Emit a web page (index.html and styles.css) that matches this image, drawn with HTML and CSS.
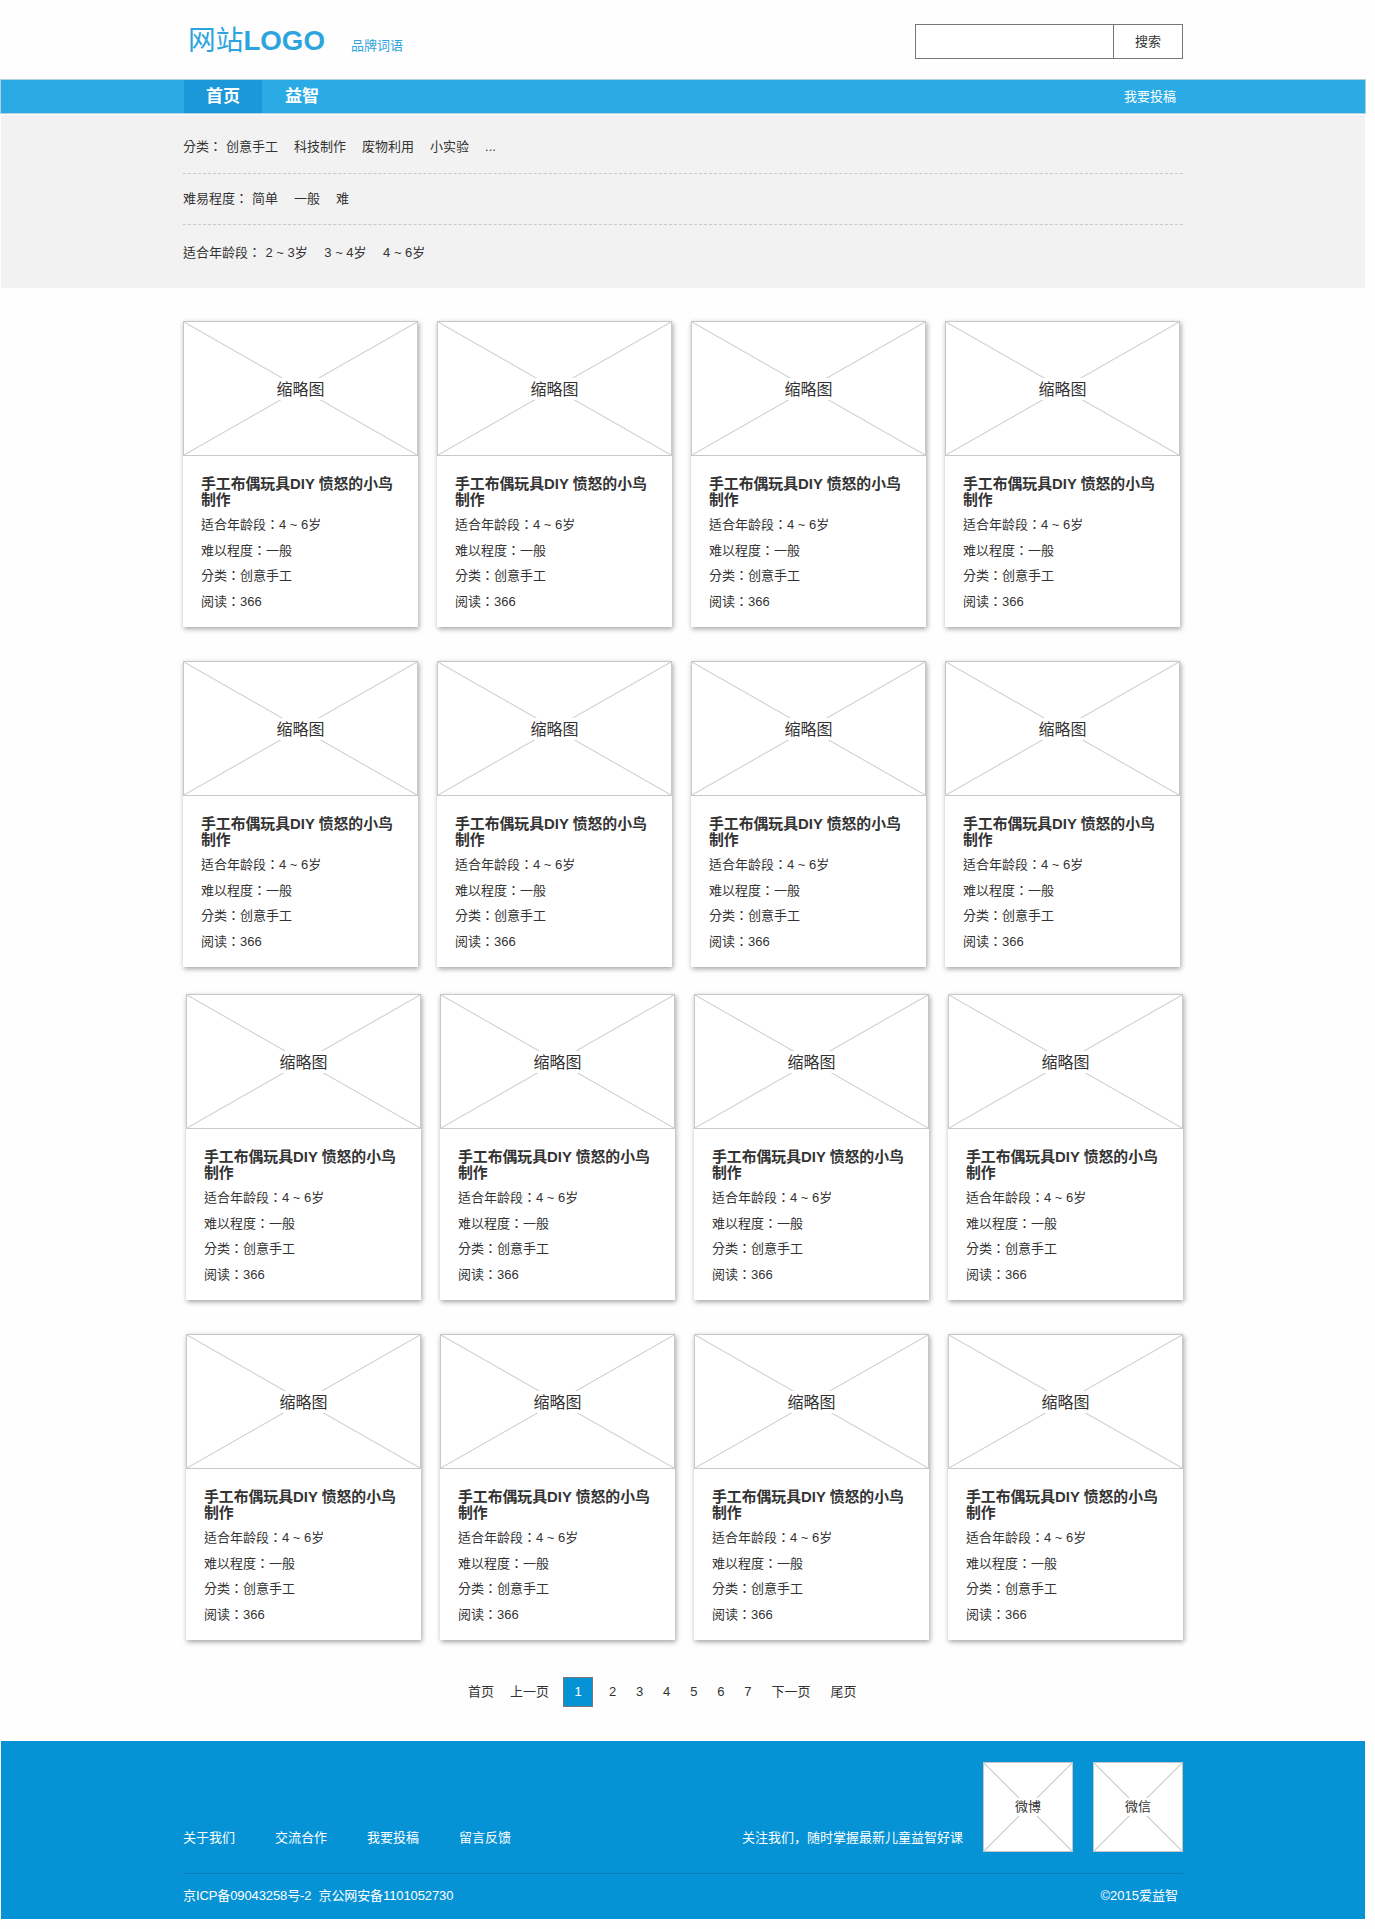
FILE: index.html
```html
<!DOCTYPE html>
<html lang="zh-CN">
<head>
<meta charset="utf-8">
<title>益智</title>
<link rel="stylesheet" href="styles.css">
</head>
<body>
<header class="header wrap">
  <div class="brand"><h1 class="logo"><span class="logo-cn">网站</span>LOGO</h1><span class="slogan">品牌词语</span></div>
  <form class="search"><input class="search-input" type="text" aria-label="搜索"><button class="search-btn" type="button">搜索</button></form>
</header>
<nav class="nav">
  <div class="nav-inner">
    <a class="nav-item active">首页</a><a class="nav-item">益智</a><a class="nav-post">我要投稿</a>
  </div>
</nav>
<section class="filters">
  <div class="filter-row"><span class="filter-label">分类：</span><a>创意手工</a><a>科技制作</a><a>废物利用</a><a>小实验</a><a>...</a></div>
  <div class="filter-row"><span class="filter-label">难易程度：</span><a>简单</a><a>一般</a><a>难</a></div>
  <div class="filter-row last"><span class="filter-label">适合年龄段：</span><a>2 ~ 3岁</a><a>3 ~ 4岁</a><a>4 ~ 6岁</a></div>
</section>
<main class="list">
  <div class="cards">
    <article class="card"><div class="thumb"><span>缩略图</span></div><h2>手工布偶玩具DIY 愤怒的小鸟制作</h2><p>适合年龄段：4 ~ 6岁</p><p>难以程度：一般</p><p>分类：创意手工</p><p>阅读：366</p></article>
    <article class="card"><div class="thumb"><span>缩略图</span></div><h2>手工布偶玩具DIY 愤怒的小鸟制作</h2><p>适合年龄段：4 ~ 6岁</p><p>难以程度：一般</p><p>分类：创意手工</p><p>阅读：366</p></article>
    <article class="card"><div class="thumb"><span>缩略图</span></div><h2>手工布偶玩具DIY 愤怒的小鸟制作</h2><p>适合年龄段：4 ~ 6岁</p><p>难以程度：一般</p><p>分类：创意手工</p><p>阅读：366</p></article>
    <article class="card"><div class="thumb"><span>缩略图</span></div><h2>手工布偶玩具DIY 愤怒的小鸟制作</h2><p>适合年龄段：4 ~ 6岁</p><p>难以程度：一般</p><p>分类：创意手工</p><p>阅读：366</p></article>
    <article class="card"><div class="thumb"><span>缩略图</span></div><h2>手工布偶玩具DIY 愤怒的小鸟制作</h2><p>适合年龄段：4 ~ 6岁</p><p>难以程度：一般</p><p>分类：创意手工</p><p>阅读：366</p></article>
    <article class="card"><div class="thumb"><span>缩略图</span></div><h2>手工布偶玩具DIY 愤怒的小鸟制作</h2><p>适合年龄段：4 ~ 6岁</p><p>难以程度：一般</p><p>分类：创意手工</p><p>阅读：366</p></article>
    <article class="card"><div class="thumb"><span>缩略图</span></div><h2>手工布偶玩具DIY 愤怒的小鸟制作</h2><p>适合年龄段：4 ~ 6岁</p><p>难以程度：一般</p><p>分类：创意手工</p><p>阅读：366</p></article>
    <article class="card"><div class="thumb"><span>缩略图</span></div><h2>手工布偶玩具DIY 愤怒的小鸟制作</h2><p>适合年龄段：4 ~ 6岁</p><p>难以程度：一般</p><p>分类：创意手工</p><p>阅读：366</p></article>
  </div>
  <div class="cards shifted">
    <article class="card"><div class="thumb"><span>缩略图</span></div><h2>手工布偶玩具DIY 愤怒的小鸟制作</h2><p>适合年龄段：4 ~ 6岁</p><p>难以程度：一般</p><p>分类：创意手工</p><p>阅读：366</p></article>
    <article class="card"><div class="thumb"><span>缩略图</span></div><h2>手工布偶玩具DIY 愤怒的小鸟制作</h2><p>适合年龄段：4 ~ 6岁</p><p>难以程度：一般</p><p>分类：创意手工</p><p>阅读：366</p></article>
    <article class="card"><div class="thumb"><span>缩略图</span></div><h2>手工布偶玩具DIY 愤怒的小鸟制作</h2><p>适合年龄段：4 ~ 6岁</p><p>难以程度：一般</p><p>分类：创意手工</p><p>阅读：366</p></article>
    <article class="card"><div class="thumb"><span>缩略图</span></div><h2>手工布偶玩具DIY 愤怒的小鸟制作</h2><p>适合年龄段：4 ~ 6岁</p><p>难以程度：一般</p><p>分类：创意手工</p><p>阅读：366</p></article>
    <article class="card"><div class="thumb"><span>缩略图</span></div><h2>手工布偶玩具DIY 愤怒的小鸟制作</h2><p>适合年龄段：4 ~ 6岁</p><p>难以程度：一般</p><p>分类：创意手工</p><p>阅读：366</p></article>
    <article class="card"><div class="thumb"><span>缩略图</span></div><h2>手工布偶玩具DIY 愤怒的小鸟制作</h2><p>适合年龄段：4 ~ 6岁</p><p>难以程度：一般</p><p>分类：创意手工</p><p>阅读：366</p></article>
    <article class="card"><div class="thumb"><span>缩略图</span></div><h2>手工布偶玩具DIY 愤怒的小鸟制作</h2><p>适合年龄段：4 ~ 6岁</p><p>难以程度：一般</p><p>分类：创意手工</p><p>阅读：366</p></article>
    <article class="card"><div class="thumb"><span>缩略图</span></div><h2>手工布偶玩具DIY 愤怒的小鸟制作</h2><p>适合年龄段：4 ~ 6岁</p><p>难以程度：一般</p><p>分类：创意手工</p><p>阅读：366</p></article>
  </div>
</main>
<div class="pager">
  <a class="first">首页</a><a class="prev">上一页</a><a class="current">1</a>
  <div class="pages"><a>2</a><a>3</a><a>4</a><a>5</a><a>6</a><a>7</a></div>
  <a class="next">下一页</a><a>尾页</a>
</div>
<footer class="footer">
  <div class="footer-top">
    <div class="footer-links"><a>关于我们</a><a>交流合作</a><a>我要投稿</a><a>留言反馈</a></div>
    <span class="follow">关注我们，随时掌握最新儿童益智好课</span>
    <div class="qr"><span>微博</span></div>
    <div class="qr"><span>微信</span></div>
  </div>
  <div class="footer-bottom"><span class="icp">京ICP备09043258号-2&nbsp; 京公网安备1101052730</span><span>©2015爱益智</span></div>
</footer>
</body>
</html>
```
FILE: styles.css
```css
* { box-sizing: border-box; }
body {
  margin: 0;
  background: #fefefe;
  color: #333;
  font: 13px/20px "Liberation Sans", "Noto Sans CJK SC", sans-serif;
}
h1, h2, p { margin: 0; }
a { white-space: nowrap; }

.wrap { width: 1000px; margin-left: 183px; }

.header {
  height: 79px;
  display: flex;
  justify-content: space-between;
  align-items: flex-start;
}
.brand { display: flex; align-items: baseline; padding: 21px 0 0 5px; color: #2ea4de; }
.logo { font-size: 27.7px; line-height: 40px; font-weight: bold; width: 163px; white-space: nowrap; }
.logo-cn { font-weight: 400; }
.slogan { font-size: 13px; }

.search { display: flex; width: 268px; height: 35px; margin-top: 24px; border: 1px solid #777; }
.search-input { width: 197px; border: 0; padding: 0 8px; background: #fff; font: inherit; }
.search-btn {
  flex: 1;
  border: 0;
  border-left: 1px solid #777;
  padding: 0;
  background: #fff;
  color: #333;
  font: inherit;
}

.nav { width: 1366px; height: 35px; border: 1px solid #b3cfdc; background: #2aabe6; }
.nav-inner { width: 999px; height: 33px; margin-left: 183px; display: flex; align-items: stretch; color: #fff; }
.nav-item { width: 78px; font-size: 17px; line-height: 34px; font-weight: bold; text-align: center; }
.nav-item + .nav-item { width: 80px; }
.nav-item.active { background: #1b98d8; }
.nav-post { margin-left: auto; padding-right: 7px; line-height: 33px; }

.filters { width: 1364px; height: 173px; margin: 1px 0 0 1px; padding-left: 182px; background: #f2f2f2; }
.filter-row {
  width: 1000px;
  height: 51px;
  display: flex;
  align-items: center;
  gap: 16px;
  border-bottom: 1px dashed #c8c8c8;
}
.filter-row:first-child { height: 59px; padding-top: 6px; }
.filter-row.last { height: 56px; border: 0; gap: 16.5px; }
.filter-label { margin-right: -12px; }

/* The TC face without localized forms centres the fullwidth colon. */
.filter-label, .card p {
  font-family: "Liberation Sans", "Noto Sans CJK TC", sans-serif;
  font-feature-settings: "locl" 0;
}

.list { padding: 33px 0 0 183px; }
.cards { display: grid; grid-template-columns: repeat(4, 235px); gap: 34px 19px; }
.cards.shifted { margin: 27px 0 0 3px; }
.card { height: 306px; background: #fff; box-shadow: 1px 2px 5px rgba(0, 0, 0, .36); }
.thumb, .qr {
  display: flex;
  align-items: center;
  justify-content: center;
  border: 1px solid #c8c8c8;
  background:
    linear-gradient(to top right, transparent calc(50% - 1px), #ccc 50%, transparent calc(50% + 1px)),
    linear-gradient(to bottom right, transparent calc(50% - 1px), #ccc 50%, transparent calc(50% + 1px)),
    #fff;
}
.thumb { height: 135px; }
.thumb span { height: 22px; background: #fff; font-size: 16px; line-height: 24px; }
.card h2 { margin: 20px 18px 4px; font-size: 14.85px; line-height: 16px; font-weight: bold; }
.card p { padding-left: 18px; line-height: 25.5px; }

.pager { display: flex; align-items: center; height: 30px; margin: 37px 0 0 468px; }
.first { margin-right: 16px; }
.prev { margin-right: 14px; }
.current {
  width: 30px;
  height: 30px;
  border: 1px solid #777;
  background: #0693d6;
  color: #fff;
  line-height: 28px;
  text-align: center;
}
.pages { display: flex; gap: 19.8px; margin: 0 20px 0 16px; }
.next { margin-right: 20px; }

.footer {
  width: 1364px;
  height: 178px;
  margin: 34px 0 10px 1px;
  padding: 21px 182px 0;
  background: #0693d6;
  color: #fff;
}
.footer-top { display: flex; align-items: flex-start; height: 112px; border-bottom: 1px solid #087fbd; }
.footer-links { display: flex; gap: 40px; margin: 66px auto 0 0; }
.follow { margin-top: 66px; }
.qr { width: 90px; height: 90px; margin-left: 20px; color: #333; }
.qr span { height: 18px; background: #fff; line-height: 18px; }
.footer-bottom { display: flex; justify-content: space-between; padding: 12px 5px 0 0; }
.icp { letter-spacing: -.1px; }
```
